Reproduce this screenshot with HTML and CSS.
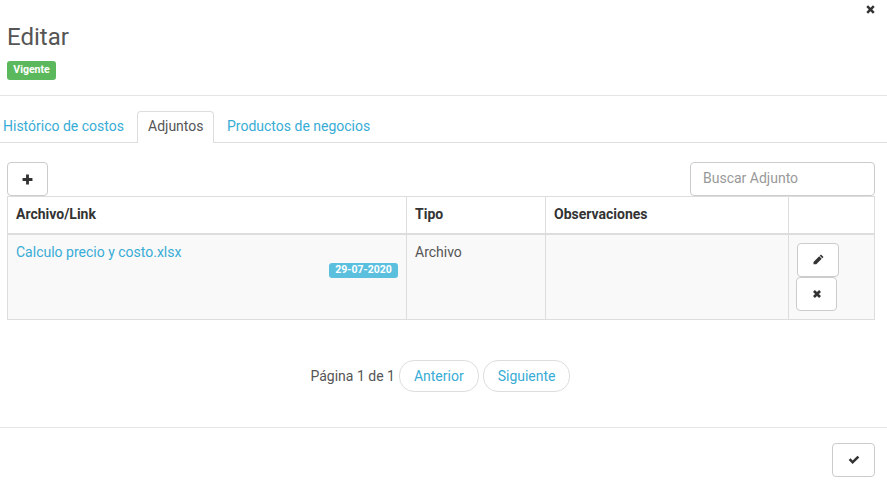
FILE: index.html
```html
<!DOCTYPE html>
<html lang="es">
<head>
<meta charset="utf-8">
<title>Editar</title>
<link rel="stylesheet" href="styles.css">
</head>
<body>
<div class="modal">
  <header class="head">
    <button class="close" type="button" aria-label="Cerrar"><svg class="ic-close" viewBox="0 0 10 10"><path d="M1.2 2.8 2.8 1.2 5 3.4 7.2 1.2 8.8 2.8 6.6 5 8.8 7.2 7.2 8.8 5 6.6 2.8 8.8 1.2 7.2 3.4 5Z"/></svg></button>
    <h1 class="title">Editar</h1>
    <span class="badge badge-green">Vigente</span>
  </header>
  <nav class="tabs">
    <a class="tab">Histórico de costos</a>
    <a class="tab active">Adjuntos</a>
    <a class="tab">Productos de negocios</a>
  </nav>
  <section class="content">
    <div class="toolbar">
      <button class="btn btn-add" type="button" aria-label="Agregar"><svg class="ic-plus" viewBox="0 0 10 10"><path d="M3.7 0.5H6.3V3.7H9.5V6.3H6.3V9.5H3.7V6.3H0.5V3.7H3.7Z"/></svg></button>
      <input class="search" type="text" placeholder="Buscar Adjunto">
    </div>
    <table class="grid">
      <colgroup><col class="c1"><col class="c2"><col class="c3"><col></colgroup>
      <thead>
        <tr><th>Archivo/Link</th><th>Tipo</th><th>Observaciones</th><th></th></tr>
      </thead>
      <tbody>
        <tr>
          <td>
            <a class="file">Calculo precio y costo.xlsx</a>
            <div class="date-row"><span class="badge badge-blue">29-07-2020</span></div>
          </td>
          <td>Archivo</td>
          <td></td>
          <td class="actions">
            <button class="btn btn-edit" type="button" aria-label="Editar"><svg class="ic-pencil" viewBox="0 0 11 11"><path d="M8 0.5 10.5 3 9.3 4.2 6.8 1.7ZM6.2 2.3 8.7 4.8 3.3 10.2H0.5V7.9Z"/></svg></button>
            <button class="btn btn-del" type="button" aria-label="Eliminar"><svg class="ic-x" viewBox="0 0 10 10"><path d="M1 2.9 2.9 1 5 3.1 7.1 1 9 2.9 6.9 5 9 7.1 7.1 9 5 6.9 2.9 9 1 7.1 3.1 5Z"/></svg></button>
          </td>
        </tr>
      </tbody>
    </table>
    <div class="pager">
      <span class="pager-text">Página 1 de 1</span>
      <a class="pill">Anterior</a>
      <a class="pill">Siguiente</a>
    </div>
  </section>
  <footer class="foot">
    <button class="btn btn-ok" type="button" aria-label="Aceptar"><svg class="ic-check" viewBox="0 0 12 10"><path d="M0.7 5 2.5 3.3 4.6 5.4 9.5 0.8 11.3 2.5 4.6 8.9Z"/></svg></button>
  </footer>
</div>
</body>
</html>
```
FILE: styles.css
```css
* { box-sizing: border-box; }
html, body { margin: 0; padding: 0; }
body {
  width: 887px;
  height: 487px;
  overflow: hidden;
  background: #fff;
  font-family: Roboto, "Liberation Sans", sans-serif;
  font-size: 14px;
  line-height: 20px;
  color: #555;
}
svg { display: block; fill: #333; }
button { font-family: inherit; padding: 0; cursor: pointer; }

.head {
  position: relative;
  height: 96px;
  padding: 20px 7px 0;
  border-bottom: 1px solid #e5e5e5;
}
.close {
  position: absolute;
  top: 4px;
  right: 11px;
  width: 11px;
  height: 11px;
  border: 0;
  background: none;
}
.ic-close { width: 11px; height: 11px; }
.title {
  margin: 0;
  font-size: 24px;
  font-weight: 400;
  line-height: 34px;
  color: #555;
}
.badge {
  display: inline-block;
  font-weight: 700;
  color: #fff;
  border-radius: 3px;
  text-align: center;
}
.badge-green {
  margin-top: 7px;
  width: 49px;
  height: 19px;
  font-size: 10.5px;
  line-height: 17px;
  background: #5cb85c;
  vertical-align: top;
}
.badge-blue {
  width: 69px;
  height: 15px;
  font-size: 10.5px;
  line-height: 14px;
  background: #5bc0de;
}

.tabs {
  display: flex;
  height: 47px;
  padding-top: 15px;
  border-bottom: 1px solid #ddd;
}
.tab {
  height: 32px;
  padding: 4px 10px 0;
  color: #38acd6;
  border: 1px solid transparent;
  border-bottom: 0;
}
.tab:first-child { padding-left: 3px; border-left: 0; }
.tab:nth-child(1) { width: 137px; }
.tab.active {
  width: 77px;
  color: #555;
  background: #fff;
  border-color: #ddd;
  border-radius: 4px 4px 0 0;
  height: 32px;
}
.tab:nth-child(3) { padding-left: 12px; }

.content { padding: 19px 12px 0 7px; }
.toolbar {
  display: flex;
  justify-content: space-between;
}
.btn {
  display: flex;
  align-items: center;
  justify-content: center;
  height: 34px;
  background: #fff;
  border: 1px solid #ccc;
  border-radius: 4px;
}
.btn-add { width: 41px; }
.ic-plus { width: 11px; height: 11px; }
.search {
  width: 185px;
  height: 34px;
  padding: 0 12px 2px;
  font: inherit;
  color: #555;
  border: 1px solid #ccc;
  border-radius: 4px;
  outline: 0;
}
.search::placeholder { color: #999; opacity: 1; }

.grid {
  width: 868px;
  table-layout: fixed;
  border-collapse: collapse;
}
.c1 { width: 399px; }
.c2 { width: 139px; }
.c3 { width: 243px; }
.grid th, .grid td {
  padding: 7px 8px 8px;
  border: 1px solid #ddd;
  vertical-align: top;
  text-align: left;
}
.grid th {
  height: 37px;
  color: #333;
  font-weight: 700;
  border-bottom-width: 2px;
}
.grid td { height: 86px; background: #f9f9f9; }
.file { color: #38acd6; }
.date-row {
  display: flex;
  justify-content: flex-end;
  margin-top: 1px;
}
.grid td.actions { padding: 8px 0 8px 7px; }
.btn-edit { width: 42px; margin-left: 1px; }
.btn-del { width: 41px; }
.ic-pencil { width: 11px; height: 11px; }
.ic-x { width: 10px; height: 10px; }

.pager {
  display: flex;
  align-items: center;
  justify-content: center;
  height: 32px;
  margin-top: 40px;
  padding-right: 2px;
}
.pager-text { margin-right: 4px; }
.pill {
  height: 32px;
  padding: 5px 14px;
  margin-right: 4px;
  color: #38acd6;
  background: #fff;
  border: 1px solid #ddd;
  border-radius: 15px;
}
.pill:last-child { margin-right: 0; padding-right: 13px; }

.foot {
  display: flex;
  justify-content: flex-end;
  margin-top: 35px;
  padding: 15px 12px 0;
  border-top: 1px solid #e5e5e5;
}
.btn-ok { width: 43px; }
.ic-check { width: 12px; height: 10px; }
```
